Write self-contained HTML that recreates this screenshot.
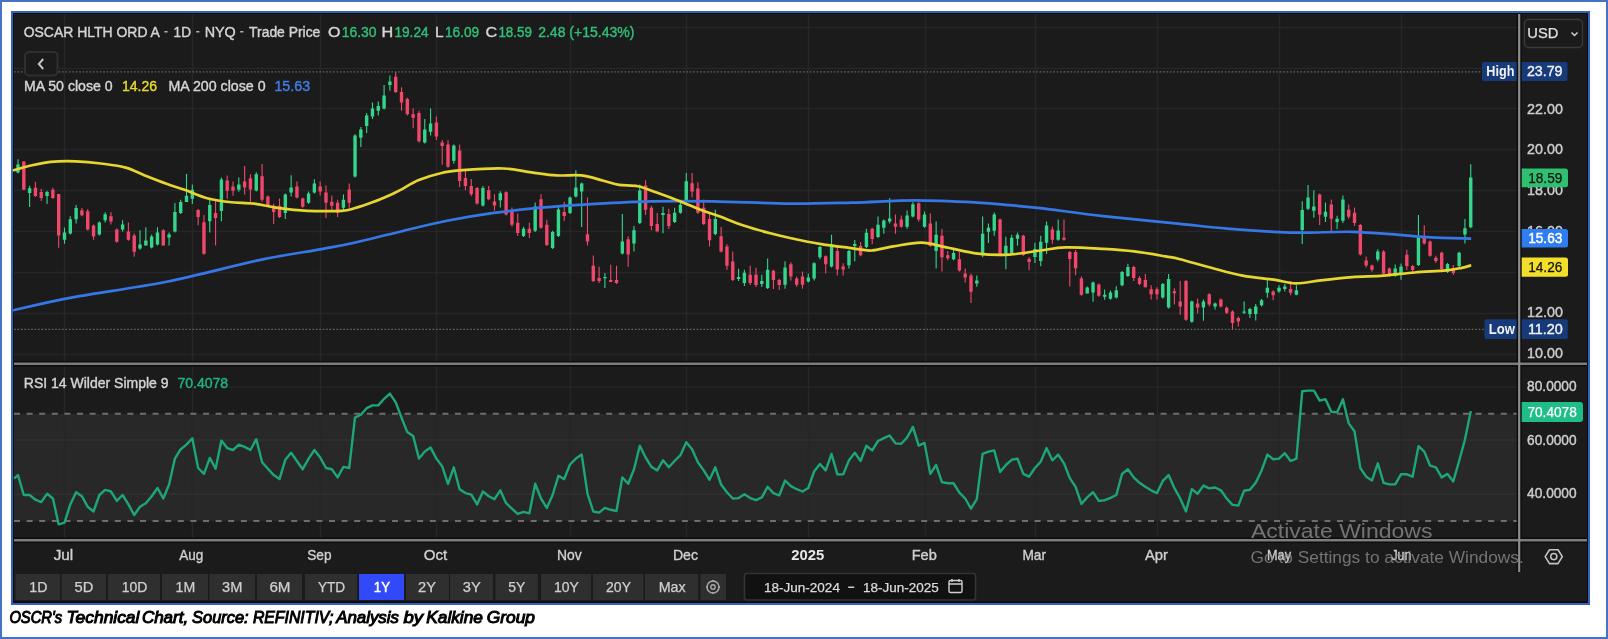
<!DOCTYPE html><html><head><meta charset="utf-8"><style>
html,body{margin:0;padding:0;background:#fff;width:1608px;height:639px;overflow:hidden}
svg{position:absolute;left:0;top:0;font-family:"Liberation Sans", sans-serif;filter:blur(0.55px)}
</style></head><body>
<svg width="1608" height="639" viewBox="0 0 1608 639">
<rect x="0" y="0" width="1608" height="639" fill="#ffffff"/>
<rect x="1" y="1" width="1606" height="637" fill="none" stroke="#4472c4" stroke-width="2"/>
<rect x="12" y="12" width="1577" height="592" fill="#0f0d0a" stroke="#3461bd" stroke-width="2"/>
<rect x="14" y="14" width="1573" height="587" fill="#1b1b1b"/>

<rect x="14" y="413.8" width="1505" height="107.1" fill="#282828"/>
<path d="M14 68.5H1519 M14 108.5H1519 M14 149.5H1519 M14 190.5H1519 M14 231.5H1519 M14 272.5H1519 M14 313.5H1519 M14 354.5H1519 M637 27.5H1519 M229 387H1519 M64.5 14V540 M192.5 14V540 M320.5 14V540 M436.5 14V540 M570.5 14V540 M686.5 14V540 M808.5 14V540 M925.5 14V540 M1035.5 14V540 M1157.5 14V540 M1279.5 14V540 M1401.5 14V540" stroke="#262628" stroke-width="1.6" fill="none"/>
<path d="M14 440H1519 M14 494H1519" stroke="#313133" stroke-width="1.6" fill="none"/>
<path d="M14 71.9H1482 M14 329.4H1484" stroke="#626262" stroke-width="1.3" stroke-dasharray="1.7 1.73" fill="none"/>
<path d="M14 413.8H1519 M14 520.9H1519" stroke="#6e6e6e" stroke-width="2" stroke-dasharray="6 6.6" fill="none"/>
<path d="M18.00 159.3V173.6 M29.62 185.8V207.1 M47.05 190.8V204.1 M64.49 227.5V243.7 M70.30 216.3V234.6 M76.11 205.1V223.4 M99.35 221.4V235.6 M105.16 212.2V222.4 M122.60 220.3V231.5 M140.03 230.3V249.7 M145.84 227.3V245.6 M151.65 234.4V248.6 M157.46 227.3V245.6 M169.09 232.4V245.6 M174.90 202.9V232.4 M180.71 199.8V214.1 M186.52 174.0V201.9 M192.33 184.6V203.9 M209.76 198.8V232.4 M221.38 177.5V221.2 M238.82 177.5V191.7 M256.25 172.2V191.5 M285.31 193.6V219.0 M291.12 175.2V196.6 M308.55 191.5V203.7 M314.36 179.3V193.6 M343.42 194.6V210.8 M355.04 134.2V177.6 M360.85 127.1V147.1 M366.66 113.1V133.0 M372.47 102.5V118.9 M378.28 101.4V115.4 M384.09 84.9V109.6 M389.90 75.6V90.8 M424.77 118.9V143.6 M430.58 108.4V135.4 M453.82 144.4V163.7 M482.88 186.1V206.4 M500.31 191.2V207.5 M523.56 226.8V236.9 M535.18 202.4V231.9 M552.61 230.8V249.1 M558.42 206.4V236.9 M570.04 196.6V213.9 M575.86 170.2V197.6 M581.67 182.4V227.1 M604.91 272.9V288.1 M622.34 213.9V254.6 M633.97 226.1V251.5 M639.78 184.4V224.1 M663.02 206.8V233.2 M674.64 207.7V223.0 M680.45 202.6V213.8 M686.26 173.1V203.6 M715.32 209.7V235.2 M738.56 268.7V280.9 M744.38 269.7V286.0 M761.81 274.8V287.0 M767.62 258.6V289.1 M785.05 261.3V288.7 M808.30 273.5V282.6 M814.11 262.3V280.6 M819.92 246.0V259.2 M831.54 234.8V267.4 M848.97 250.1V268.4 M854.78 239.9V261.3 M866.41 228.7V248.0 M878.03 216.5V237.9 M883.84 219.6V233.8 M889.65 198.2V223.6 M907.08 210.4V228.7 M912.89 202.3V217.5 M924.52 211.4V227.7 M936.14 221.6V268.4 M953.57 248.0V260.2 M976.81 275.5V286.7 M982.63 216.5V257.2 M988.44 223.6V243.0 M994.25 212.5V235.8 M1005.87 236.7V269.2 M1011.68 234.7V254.0 M1017.49 232.6V245.8 M1034.92 242.8V263.1 M1040.74 235.7V266.2 M1046.55 221.4V254.0 M1058.17 219.4V240.8 M1087.22 286.5V293.6 M1093.04 281.4V301.8 M1104.66 289.6V299.7 M1110.47 290.6V299.7 M1116.28 286.2V298.4 M1122.09 270.9V286.2 M1127.90 263.8V277.0 M1162.77 283.1V298.4 M1168.58 274.0V308.6 M1191.82 300.4V322.8 M1203.44 299.4V320.8 M1215.07 302.5V309.6 M1244.12 301.6V314.1 M1249.93 307.8V317.9 M1255.74 304.1V320.4 M1261.55 299.1V306.6 M1267.37 280.3V297.8 M1278.99 285.3V292.8 M1284.80 284.0V291.5 M1296.42 285.3V295.3 M1302.23 201.3V243.9 M1308.04 185.0V210.1 M1313.85 190.3V217.8 M1325.47 202.5V221.9 M1337.10 215.8V229.0 M1342.91 195.4V222.9 M1377.77 249.3V261.5 M1395.21 264.6V276.8 M1401.02 263.6V279.8 M1418.45 215.1V266.0 M1447.51 262.9V273.1 M1459.13 251.7V267.0 M1464.94 219.1V243.6 M1470.75 164.2V228.3" stroke="#34d68c" stroke-width="1.1" fill="none"/>
<path d="M23.81 161.4V189.8 M35.43 181.7V196.9 M41.24 188.8V201.0 M52.87 187.8V199.0 M58.68 193.9V247.8 M81.92 208.1V216.3 M87.73 209.1V230.5 M93.54 224.4V239.7 M110.98 212.2V224.4 M116.79 228.5V242.7 M128.41 222.4V240.7 M134.22 233.4V256.8 M163.28 229.3V245.6 M198.14 209.0V225.2 M203.95 215.1V254.7 M215.57 199.8V245.6 M227.20 175.4V198.8 M233.01 181.5V195.8 M244.63 166.1V194.6 M250.44 174.2V201.7 M262.06 164.1V201.7 M267.87 195.6V206.8 M273.68 203.7V224.1 M279.50 198.6V218.0 M296.93 181.4V198.6 M302.74 197.6V207.8 M320.17 181.4V195.6 M325.98 185.4V218.0 M331.79 195.6V210.8 M337.61 199.7V216.9 M349.23 183.4V207.8 M395.71 72.0V93.1 M401.53 87.3V110.7 M407.34 97.8V115.4 M413.15 108.4V128.3 M418.96 110.7V142.4 M436.39 116.6V140.0 M442.20 140.0V164.7 M448.01 140.3V167.8 M459.64 144.4V187.1 M465.45 170.8V190.2 M471.26 179.0V196.3 M477.07 187.1V204.4 M488.69 186.1V200.3 M494.50 194.2V210.5 M506.12 191.2V215.6 M511.94 207.5V226.8 M517.75 213.6V235.9 M529.37 222.7V238.0 M540.99 194.2V228.8 M546.80 219.7V246.1 M564.23 201.7V221.0 M587.48 197.6V245.4 M593.29 255.6V282.0 M599.10 266.8V283.0 M610.72 264.7V282.0 M616.53 265.8V284.1 M628.15 236.3V266.8 M645.59 180.3V214.9 M651.40 205.8V230.2 M657.21 212.9V232.2 M668.83 208.8V229.1 M692.08 173.1V197.5 M697.89 182.3V213.8 M703.70 199.6V225.0 M709.51 213.8V246.4 M721.13 227.0V252.5 M726.94 244.3V269.7 M732.75 251.4V280.9 M750.19 265.7V285.0 M756.00 267.7V287.0 M773.43 269.7V289.1 M779.24 278.9V290.1 M790.86 262.3V280.6 M796.67 276.5V286.7 M802.49 271.4V288.7 M825.73 255.2V273.5 M837.35 246.0V275.5 M843.16 263.3V275.5 M860.60 241.9V256.2 M872.22 227.7V244.0 M895.46 214.5V233.8 M901.27 215.5V227.7 M918.71 202.3V221.6 M930.33 213.5V247.0 M941.95 228.7V271.4 M947.76 251.1V260.2 M959.38 252.1V271.4 M965.19 268.4V282.6 M971.00 273.5V303.0 M1000.06 218.6V256.2 M1023.30 234.7V256.0 M1029.11 257.0V270.2 M1052.36 226.5V243.8 M1063.98 219.4V240.8 M1069.79 250.9V286.5 M1075.60 249.9V275.3 M1081.41 276.4V295.7 M1098.85 283.5V296.7 M1133.71 265.8V281.1 M1139.52 276.0V285.2 M1145.33 274.0V287.2 M1151.14 285.2V299.4 M1156.96 287.2V299.4 M1174.39 288.2V304.5 M1180.20 281.1V314.7 M1186.01 280.1V320.8 M1197.63 298.4V313.6 M1209.25 293.3V306.5 M1220.88 298.4V307.5 M1226.69 306.6V314.1 M1232.50 310.3V329.1 M1238.31 316.6V326.6 M1273.18 290.3V300.3 M1290.61 281.5V295.3 M1319.66 193.4V224.9 M1331.29 199.5V231.0 M1348.72 204.6V218.8 M1354.53 207.6V225.9 M1360.34 223.9V255.4 M1366.15 256.4V267.6 M1371.96 264.6V271.7 M1383.59 250.3V274.7 M1389.40 267.6V276.8 M1406.83 249.7V270.0 M1412.64 265.0V274.1 M1424.26 225.3V244.6 M1430.07 240.5V256.8 M1435.88 255.8V262.9 M1441.69 251.7V270.0 M1453.32 265.0V275.1" stroke="#f0476b" stroke-width="1.1" fill="none"/>
<path d="M16.30 164.4h3.4V172.5h-3.4Z M27.92 188.2h3.4V192.9h-3.4Z M45.35 191.9h3.4V195.9h-3.4Z M62.79 232.5h3.4V239.7h-3.4Z M68.60 219.3h3.4V233.6h-3.4Z M74.41 208.1h3.4V219.3h-3.4Z M97.65 222.4h3.4V234.6h-3.4Z M103.46 214.2h3.4V220.3h-3.4Z M120.90 224.4h3.4V229.5h-3.4Z M138.33 244.6h3.4V248.6h-3.4Z M144.14 240.5h3.4V245.6h-3.4Z M149.95 236.4h3.4V247.6h-3.4Z M155.76 232.4h3.4V244.6h-3.4Z M167.39 234.4h3.4V237.5h-3.4Z M173.20 212.0h3.4V231.4h-3.4Z M179.01 201.9h3.4V213.0h-3.4Z M184.82 195.8h3.4V201.9h-3.4Z M190.63 189.7h3.4V198.8h-3.4Z M208.06 204.9h3.4V221.2h-3.4Z M219.69 179.5h3.4V211.0h-3.4Z M237.12 184.6h3.4V189.7h-3.4Z M254.55 174.2h3.4V190.5h-3.4Z M283.61 194.6h3.4V212.9h-3.4Z M289.42 187.5h3.4V192.5h-3.4Z M306.85 193.6h3.4V202.7h-3.4Z M312.66 183.4h3.4V192.5h-3.4Z M341.72 199.7h3.4V207.8h-3.4Z M353.34 135.4h3.4V176.4h-3.4Z M359.15 129.5h3.4V137.7h-3.4Z M364.96 115.4h3.4V126.0h-3.4Z M370.77 108.4h3.4V116.6h-3.4Z M376.58 106.0h3.4V110.7h-3.4Z M382.39 95.5h3.4V108.4h-3.4Z M388.20 81.4h3.4V84.9h-3.4Z M423.07 129.5h3.4V142.4h-3.4Z M428.88 123.6h3.4V131.8h-3.4Z M452.12 145.4h3.4V160.7h-3.4Z M481.18 188.1h3.4V205.4h-3.4Z M498.61 193.2h3.4V200.3h-3.4Z M521.86 228.8h3.4V235.9h-3.4Z M533.48 206.4h3.4V230.8h-3.4Z M550.91 231.9h3.4V248.1h-3.4Z M556.72 209.5h3.4V235.9h-3.4Z M568.34 197.6h3.4V212.9h-3.4Z M574.16 187.5h3.4V196.6h-3.4Z M579.97 183.4h3.4V191.5h-3.4Z M603.21 276.9h3.4V278.2h-3.4Z M620.64 241.4h3.4V253.6h-3.4Z M632.27 230.2h3.4V243.4h-3.4Z M638.08 190.5h3.4V223.0h-3.4Z M661.32 212.9h3.4V214.9h-3.4Z M672.94 212.8h3.4V221.9h-3.4Z M678.75 204.7h3.4V212.8h-3.4Z M684.56 181.3h3.4V201.6h-3.4Z M713.62 218.9h3.4V234.1h-3.4Z M736.86 276.9h3.4V278.9h-3.4Z M742.67 272.8h3.4V283.0h-3.4Z M760.11 280.9h3.4V284.0h-3.4Z M765.92 269.7h3.4V288.0h-3.4Z M783.35 267.4h3.4V284.7h-3.4Z M806.60 277.5h3.4V281.6h-3.4Z M812.41 263.3h3.4V278.6h-3.4Z M818.22 247.0h3.4V257.2h-3.4Z M829.84 246.0h3.4V266.4h-3.4Z M847.27 251.1h3.4V265.3h-3.4Z M853.08 244.0h3.4V246.0h-3.4Z M864.71 232.8h3.4V247.0h-3.4Z M876.33 224.7h3.4V236.9h-3.4Z M882.14 220.6h3.4V227.7h-3.4Z M887.95 218.6h3.4V221.6h-3.4Z M905.38 215.5h3.4V226.7h-3.4Z M911.19 204.3h3.4V216.5h-3.4Z M922.82 214.5h3.4V226.7h-3.4Z M934.44 234.8h3.4V251.1h-3.4Z M951.87 253.1h3.4V259.2h-3.4Z M975.11 280.6h3.4V283.6h-3.4Z M980.93 233.8h3.4V255.2h-3.4Z M986.74 227.7h3.4V231.8h-3.4Z M992.55 214.5h3.4V230.8h-3.4Z M1004.17 245.8h3.4V255.0h-3.4Z M1009.98 237.7h3.4V253.0h-3.4Z M1015.79 234.7h3.4V238.7h-3.4Z M1033.22 248.9h3.4V257.0h-3.4Z M1039.04 241.8h3.4V261.1h-3.4Z M1044.85 225.5h3.4V242.8h-3.4Z M1056.47 230.6h3.4V239.7h-3.4Z M1085.52 287.5h3.4V293.6h-3.4Z M1091.34 282.5h3.4V292.6h-3.4Z M1102.96 294.7h3.4V296.7h-3.4Z M1108.77 292.6h3.4V298.7h-3.4Z M1114.58 290.2h3.4V297.4h-3.4Z M1120.39 271.9h3.4V285.2h-3.4Z M1126.20 266.9h3.4V276.0h-3.4Z M1161.07 284.1h3.4V297.4h-3.4Z M1166.88 279.1h3.4V307.5h-3.4Z M1190.12 301.4h3.4V321.8h-3.4Z M1201.74 301.4h3.4V307.5h-3.4Z M1213.37 303.5h3.4V306.5h-3.4Z M1242.42 311.6h3.4V312.8h-3.4Z M1248.23 309.1h3.4V314.1h-3.4Z M1254.04 306.6h3.4V314.1h-3.4Z M1259.85 300.3h3.4V305.3h-3.4Z M1265.66 287.8h3.4V292.8h-3.4Z M1277.29 287.8h3.4V291.5h-3.4Z M1283.10 286.5h3.4V289.0h-3.4Z M1294.72 290.3h3.4V294.8h-3.4Z M1300.53 210.1h3.4V230.1h-3.4Z M1306.34 197.6h3.4V208.8h-3.4Z M1312.15 206.6h3.4V210.7h-3.4Z M1323.77 211.7h3.4V216.8h-3.4Z M1335.40 218.8h3.4V221.9h-3.4Z M1341.21 199.5h3.4V220.8h-3.4Z M1376.07 251.4h3.4V259.5h-3.4Z M1393.51 268.6h3.4V275.8h-3.4Z M1399.32 266.6h3.4V273.7h-3.4Z M1416.75 236.4h3.4V265.0h-3.4Z M1445.81 263.9h3.4V272.1h-3.4Z M1457.43 252.7h3.4V266.0h-3.4Z M1463.24 228.3h3.4V234.4h-3.4Z M1469.05 177.4h3.4V227.3h-3.4Z" fill="#34d68c"/>
<path d="M22.11 161.4h3.4V189.8h-3.4Z M33.73 187.8h3.4V195.9h-3.4Z M39.54 191.9h3.4V198.0h-3.4Z M51.17 189.8h3.4V198.0h-3.4Z M56.98 193.9h3.4V235.6h-3.4Z M80.22 210.2h3.4V215.2h-3.4Z M86.03 211.2h3.4V229.5h-3.4Z M91.84 225.4h3.4V236.6h-3.4Z M109.28 216.3h3.4V221.4h-3.4Z M115.09 229.5h3.4V241.7h-3.4Z M126.71 231.5h3.4V239.7h-3.4Z M132.52 235.4h3.4V251.7h-3.4Z M161.58 230.3h3.4V245.6h-3.4Z M196.44 210.0h3.4V217.1h-3.4Z M202.25 222.2h3.4V253.7h-3.4Z M213.87 213.0h3.4V218.1h-3.4Z M225.50 180.5h3.4V190.7h-3.4Z M231.31 186.6h3.4V190.7h-3.4Z M242.93 181.4h3.4V187.5h-3.4Z M248.74 178.3h3.4V189.5h-3.4Z M260.36 176.3h3.4V199.7h-3.4Z M266.17 196.6h3.4V205.8h-3.4Z M271.98 205.8h3.4V211.9h-3.4Z M277.80 205.8h3.4V216.9h-3.4Z M295.23 186.4h3.4V197.6h-3.4Z M301.04 198.6h3.4V206.8h-3.4Z M318.47 186.4h3.4V191.5h-3.4Z M324.28 192.5h3.4V202.7h-3.4Z M330.09 201.7h3.4V205.8h-3.4Z M335.91 202.7h3.4V212.9h-3.4Z M347.53 189.5h3.4V202.7h-3.4Z M394.01 76.7h3.4V92.0h-3.4Z M399.83 92.0h3.4V102.5h-3.4Z M405.64 99.0h3.4V114.2h-3.4Z M411.45 114.2h3.4V117.8h-3.4Z M417.26 113.1h3.4V141.2h-3.4Z M434.69 122.5h3.4V136.5h-3.4Z M440.50 142.4h3.4V145.9h-3.4Z M446.31 144.4h3.4V166.8h-3.4Z M457.94 150.5h3.4V181.0h-3.4Z M463.75 178.0h3.4V186.1h-3.4Z M469.56 186.1h3.4V194.2h-3.4Z M475.37 188.1h3.4V203.4h-3.4Z M486.99 190.2h3.4V199.3h-3.4Z M492.80 201.4h3.4V205.4h-3.4Z M504.42 192.2h3.4V214.6h-3.4Z M510.24 210.5h3.4V224.7h-3.4Z M516.05 222.7h3.4V232.9h-3.4Z M527.67 228.8h3.4V232.9h-3.4Z M539.29 199.3h3.4V227.8h-3.4Z M545.10 224.7h3.4V245.1h-3.4Z M562.53 211.9h3.4V215.9h-3.4Z M585.78 234.2h3.4V241.4h-3.4Z M591.59 265.8h3.4V281.0h-3.4Z M597.40 278.0h3.4V281.0h-3.4Z M609.02 280.0h3.4V282.0h-3.4Z M614.83 280.0h3.4V283.0h-3.4Z M626.45 239.3h3.4V254.6h-3.4Z M643.89 185.4h3.4V209.8h-3.4Z M649.70 207.8h3.4V226.1h-3.4Z M655.51 224.1h3.4V231.2h-3.4Z M667.13 213.9h3.4V226.1h-3.4Z M690.38 183.3h3.4V191.4h-3.4Z M696.19 188.4h3.4V212.8h-3.4Z M702.00 207.7h3.4V224.0h-3.4Z M707.81 218.9h3.4V240.2h-3.4Z M719.43 236.2h3.4V251.4h-3.4Z M725.24 246.4h3.4V265.7h-3.4Z M731.05 261.6h3.4V279.9h-3.4Z M748.49 274.8h3.4V283.0h-3.4Z M754.30 274.8h3.4V285.0h-3.4Z M771.73 270.8h3.4V279.9h-3.4Z M777.54 279.9h3.4V285.0h-3.4Z M789.16 264.3h3.4V276.5h-3.4Z M794.97 278.6h3.4V284.7h-3.4Z M800.78 276.5h3.4V284.7h-3.4Z M824.03 256.2h3.4V264.3h-3.4Z M835.65 251.1h3.4V269.4h-3.4Z M841.46 266.4h3.4V269.4h-3.4Z M858.89 246.0h3.4V255.2h-3.4Z M870.52 228.7h3.4V238.9h-3.4Z M893.76 223.6h3.4V226.7h-3.4Z M899.57 219.6h3.4V226.7h-3.4Z M917.00 203.3h3.4V219.6h-3.4Z M928.63 223.6h3.4V246.0h-3.4Z M940.25 235.8h3.4V257.2h-3.4Z M946.06 255.2h3.4V258.2h-3.4Z M957.68 259.2h3.4V270.4h-3.4Z M963.49 273.5h3.4V277.5h-3.4Z M969.30 275.5h3.4V291.8h-3.4Z M998.36 219.6h3.4V255.2h-3.4Z M1021.60 235.7h3.4V255.0h-3.4Z M1027.41 259.1h3.4V262.1h-3.4Z M1050.66 229.6h3.4V239.7h-3.4Z M1062.28 237.7h3.4V239.7h-3.4Z M1068.09 251.9h3.4V259.1h-3.4Z M1073.90 251.9h3.4V268.2h-3.4Z M1079.71 278.4h3.4V294.7h-3.4Z M1097.15 284.5h3.4V295.7h-3.4Z M1132.01 266.9h3.4V278.0h-3.4Z M1137.82 278.0h3.4V284.1h-3.4Z M1143.63 280.1h3.4V287.2h-3.4Z M1149.44 289.2h3.4V294.3h-3.4Z M1155.26 289.2h3.4V294.3h-3.4Z M1172.69 291.3h3.4V293.3h-3.4Z M1178.50 301.4h3.4V306.5h-3.4Z M1184.31 281.1h3.4V319.7h-3.4Z M1195.93 303.5h3.4V307.5h-3.4Z M1207.55 294.3h3.4V304.5h-3.4Z M1219.18 299.4h3.4V306.5h-3.4Z M1224.99 307.8h3.4V312.8h-3.4Z M1230.80 311.6h3.4V322.9h-3.4Z M1236.61 317.9h3.4V321.6h-3.4Z M1271.48 291.5h3.4V295.3h-3.4Z M1288.91 289.0h3.4V292.8h-3.4Z M1317.96 194.4h3.4V214.7h-3.4Z M1329.59 204.6h3.4V218.8h-3.4Z M1347.02 209.7h3.4V216.8h-3.4Z M1352.83 212.7h3.4V222.9h-3.4Z M1358.64 224.9h3.4V254.4h-3.4Z M1364.45 260.5h3.4V265.6h-3.4Z M1370.26 265.6h3.4V269.7h-3.4Z M1381.88 251.4h3.4V273.7h-3.4Z M1387.70 268.6h3.4V275.8h-3.4Z M1405.13 254.8h3.4V266.0h-3.4Z M1410.94 266.0h3.4V270.0h-3.4Z M1422.56 236.4h3.4V243.6h-3.4Z M1428.37 241.5h3.4V255.8h-3.4Z M1434.18 257.8h3.4V260.9h-3.4Z M1439.99 252.7h3.4V269.0h-3.4Z M1451.62 268.0h3.4V273.1h-3.4Z" fill="#f0476b"/>
<path d="M13.0 310.3 C22.9 308.1 47.0 302.1 72.6 297.4 C98.2 292.6 135.2 288.1 166.5 281.8 C197.8 275.6 234.3 265.4 260.4 259.9 C286.5 254.4 307.4 251.8 323.0 248.9 C338.6 246.0 341.5 245.6 354.3 242.7 C367.1 239.8 384.6 235.3 400.0 231.7 C415.4 228.0 431.2 223.9 446.9 220.8 C462.5 217.7 478.2 215.1 493.9 212.9 C509.5 210.7 525.1 209.0 540.8 207.6 C556.4 206.2 569.5 205.3 587.8 204.3 C606.1 203.3 629.5 201.9 650.4 201.4 C671.3 200.9 689.7 201.0 713.0 201.4 C736.3 201.8 766.7 203.4 790.0 203.6 C813.3 203.8 831.7 203.1 852.6 202.6 C873.5 202.1 894.3 200.4 915.2 200.4 C936.1 200.4 962.1 201.8 977.8 202.6 C993.4 203.4 998.7 204.2 1009.1 205.1 C1019.5 206.0 1024.8 206.4 1040.4 208.2 C1056.1 210.0 1079.7 213.5 1103.0 216.1 C1126.3 218.7 1159.3 221.8 1180.0 223.9 C1200.7 226.0 1211.3 227.3 1227.0 228.6 C1242.7 229.9 1260.9 231.1 1273.9 231.8 C1286.9 232.5 1292.2 232.7 1305.2 232.7 C1318.2 232.7 1336.5 231.4 1352.2 231.8 C1367.9 232.2 1386.2 234.0 1399.2 234.9 C1412.2 235.8 1418.5 236.8 1430.5 237.4 C1442.5 238.0 1464.4 238.4 1471.2 238.6" stroke="#3577e6" stroke-width="2.7" fill="none" stroke-linejoin="round"/>
<path d="M13.0 170.5 C13.3 170.4 12.1 170.8 14.7 170.0 C17.3 169.2 22.8 167.3 28.8 166.0 C34.8 164.7 42.9 162.7 50.7 161.9 C58.5 161.1 67.4 161.0 75.7 161.3 C84.0 161.6 92.5 162.4 100.8 163.5 C109.1 164.6 118.5 165.6 125.8 167.6 C133.1 169.6 137.8 172.7 144.6 175.4 C151.4 178.1 159.7 181.4 166.5 183.8 C173.3 186.2 178.5 187.7 185.3 190.1 C192.1 192.5 199.9 196.2 207.2 198.2 C214.5 200.2 221.3 201.1 229.1 202.0 C236.9 202.9 246.3 202.7 254.1 203.6 C261.9 204.5 267.1 206.4 276.0 207.6 C284.9 208.8 296.3 210.3 307.3 210.8 C318.3 211.3 334.0 211.2 341.8 210.8 C349.6 210.4 349.1 209.8 354.3 208.3 C359.5 206.8 366.8 204.3 373.1 202.0 C379.4 199.7 387.4 196.2 391.9 194.2 C396.4 192.2 395.5 192.4 400.0 190.1 C404.5 187.8 412.0 182.9 418.8 180.1 C425.6 177.3 433.4 174.8 440.7 173.2 C448.0 171.5 452.2 171.0 462.6 170.2 C473.0 169.4 491.8 168.2 503.3 168.5 C514.8 168.8 522.6 171.2 531.5 172.3 C540.4 173.5 548.2 174.9 556.5 175.4 C564.8 175.9 573.7 174.5 581.5 175.4 C589.3 176.3 597.1 179.1 603.4 180.7 C609.7 182.3 613.4 183.9 619.1 184.8 C624.9 185.7 631.6 185.0 637.9 186.3 C644.2 187.6 649.4 190.0 656.7 192.6 C664.0 195.2 674.4 199.1 681.7 202.0 C689.0 204.9 694.2 207.4 700.5 209.8 C706.8 212.2 711.9 213.6 719.2 216.3 C726.5 219.0 735.9 223.0 744.3 225.8 C752.6 228.6 761.7 231.0 769.3 233.0 C776.9 235.0 781.3 236.1 790.0 238.0 C798.7 239.9 810.9 242.5 821.3 244.2 C831.7 245.9 844.2 247.2 852.6 248.3 C861.0 249.4 864.6 250.8 871.4 250.5 C878.2 250.2 884.9 247.7 893.3 246.4 C901.6 245.1 912.6 242.5 921.5 242.7 C930.4 242.9 937.1 245.6 946.5 247.4 C955.9 249.2 967.4 252.4 977.8 253.6 C988.2 254.8 998.7 255.1 1009.1 254.6 C1019.5 254.1 1031.0 251.7 1040.4 250.5 C1049.8 249.3 1055.0 247.7 1065.4 247.4 C1075.8 247.1 1091.5 248.2 1103.0 248.9 C1114.5 249.6 1123.9 250.2 1134.3 251.4 C1144.7 252.7 1158.0 255.1 1165.6 256.4 C1173.2 257.7 1172.4 257.3 1180.0 259.2 C1187.6 261.1 1200.9 265.1 1211.3 267.8 C1221.7 270.5 1232.2 273.6 1242.6 275.6 C1253.0 277.6 1265.0 278.4 1273.9 279.7 C1282.8 281.0 1288.0 283.3 1295.8 283.4 C1303.6 283.5 1311.5 281.4 1320.9 280.3 C1330.3 279.2 1341.8 277.9 1352.2 277.1 C1362.6 276.3 1373.1 276.4 1383.5 275.6 C1393.9 274.8 1404.4 273.4 1414.8 272.5 C1425.2 271.6 1438.3 271.1 1446.1 270.3 C1453.9 269.5 1457.6 268.6 1461.8 267.8 C1466.0 267.0 1469.6 265.7 1471.2 265.3" stroke="#e8d630" stroke-width="2.7" fill="none" stroke-linejoin="round"/>
<path d="M14.0 478.6 L18.0 475.1 L23.8 495.0 L29.6 495.0 L35.4 499.7 L41.2 502.1 L47.1 493.8 L52.9 498.5 L58.7 524.4 L64.5 522.7 L70.3 504.4 L76.1 492.2 L81.9 496.2 L87.7 506.8 L93.5 511.5 L99.4 495.0 L105.2 489.9 L111.0 491.5 L116.8 500.9 L122.6 495.0 L128.4 504.4 L134.2 515.0 L140.0 506.8 L145.8 503.2 L151.7 496.2 L157.5 488.0 L163.3 498.5 L169.1 484.5 L174.9 458.6 L180.7 449.2 L186.5 444.6 L192.3 438.2 L198.1 468.0 L204.0 473.9 L209.8 457.9 L215.6 468.7 L221.4 440.6 L227.2 448.1 L233.0 450.0 L238.8 444.6 L244.6 446.9 L250.4 450.0 L256.3 439.2 L262.1 462.2 L267.9 468.7 L273.7 475.1 L279.5 479.1 L285.3 459.8 L291.1 452.8 L296.9 461.0 L302.7 469.2 L308.6 458.6 L314.4 450.0 L320.2 457.5 L326.0 468.0 L331.8 469.2 L337.6 477.4 L343.4 466.9 L349.2 468.0 L355.0 417.6 L360.8 414.7 L366.7 408.2 L372.5 405.4 L378.3 405.4 L384.1 398.8 L389.9 393.6 L395.7 402.3 L401.5 417.6 L407.3 432.1 L413.1 435.9 L419.0 458.6 L424.8 451.6 L430.6 447.6 L436.4 458.6 L442.2 466.4 L448.0 483.8 L453.8 467.3 L459.6 489.2 L465.4 493.1 L471.3 494.6 L477.1 504.4 L482.9 491.5 L488.7 496.2 L494.5 499.2 L500.3 490.3 L506.1 503.2 L511.9 508.6 L517.7 513.8 L523.6 511.9 L529.4 513.3 L535.2 483.8 L541.0 498.5 L546.8 507.9 L552.6 495.0 L558.4 475.8 L564.2 479.1 L570.0 464.5 L575.9 458.6 L581.7 454.6 L587.5 493.8 L593.3 511.5 L599.1 512.6 L604.9 507.9 L610.7 509.8 L616.5 511.0 L622.3 477.4 L628.2 483.8 L634.0 469.2 L639.8 445.7 L645.6 457.5 L651.4 466.9 L657.2 470.4 L663.0 460.3 L668.8 467.3 L674.6 461.0 L680.5 455.1 L686.3 442.2 L692.1 449.2 L697.9 462.2 L703.7 470.4 L709.5 479.8 L715.3 467.3 L721.1 484.5 L726.9 492.2 L732.8 498.5 L738.6 498.1 L744.4 494.3 L750.2 498.1 L756.0 500.2 L761.8 497.4 L767.6 486.8 L773.4 493.1 L779.2 495.5 L785.1 480.5 L790.9 486.1 L796.7 489.2 L802.5 491.5 L808.3 488.0 L814.1 471.5 L819.9 464.0 L825.7 470.4 L831.5 453.9 L837.4 474.4 L843.2 474.4 L849.0 460.3 L854.8 452.8 L860.6 461.0 L866.4 445.7 L872.2 450.4 L878.0 441.0 L883.8 438.2 L889.6 435.5 L895.5 443.4 L901.3 443.8 L907.1 437.5 L912.9 426.9 L918.7 445.7 L924.5 442.9 L930.3 473.9 L936.1 465.0 L941.9 482.1 L947.8 483.3 L953.6 483.3 L959.4 492.7 L965.2 498.5 L971.0 508.6 L976.8 499.2 L982.6 453.9 L988.4 451.6 L994.2 450.4 L1000.1 472.0 L1005.9 465.0 L1011.7 459.8 L1017.5 458.6 L1023.3 473.9 L1029.1 476.7 L1034.9 468.0 L1040.7 461.7 L1046.5 448.1 L1052.4 460.3 L1058.2 454.6 L1064.0 463.3 L1069.8 478.1 L1075.6 486.8 L1081.4 503.9 L1087.2 497.4 L1093.0 492.2 L1098.8 500.9 L1104.7 500.2 L1110.5 497.8 L1116.3 495.0 L1122.1 473.9 L1127.9 469.2 L1133.7 477.4 L1139.5 482.8 L1145.3 486.8 L1151.1 490.3 L1157.0 493.1 L1162.8 480.9 L1168.6 475.1 L1174.4 488.2 L1180.2 498.5 L1186.0 511.4 L1191.8 489.1 L1197.6 493.8 L1203.4 485.6 L1209.3 488.4 L1215.1 487.5 L1220.9 490.3 L1226.7 498.5 L1232.5 504.9 L1238.3 505.6 L1244.1 490.8 L1249.9 489.8 L1255.7 482.8 L1261.6 470.4 L1267.4 454.6 L1273.2 459.3 L1279.0 458.6 L1284.8 453.2 L1290.6 461.0 L1296.4 458.6 L1302.2 391.3 L1308.0 390.6 L1313.9 390.6 L1319.7 400.7 L1325.5 399.2 L1331.3 411.7 L1337.1 412.4 L1342.9 399.2 L1348.7 423.4 L1354.5 431.2 L1360.3 468.0 L1366.2 476.7 L1372.0 480.4 L1377.8 463.3 L1383.6 482.8 L1389.4 484.4 L1395.2 484.4 L1401.0 474.3 L1406.8 474.3 L1412.6 476.7 L1418.5 446.2 L1424.3 451.6 L1430.1 465.7 L1435.9 467.3 L1441.7 477.4 L1447.5 473.9 L1453.3 481.4 L1459.1 461.0 L1464.9 439.8 L1470.8 411.0" stroke="#1ca67a" stroke-width="2.4" fill="none" stroke-linejoin="round"/>
<text x="23.7" y="37" font-size="14" fill="#d4d4d4" stroke="#d4d4d4" stroke-width="0.4" textLength="136.2" lengthAdjust="spacingAndGlyphs">OSCAR HLTH ORD A</text>
<rect x="164.4" y="31" width="3.2" height="1.5" fill="#b0b0b0"/>
<rect x="196.2" y="31" width="3.2" height="1.5" fill="#b0b0b0"/>
<rect x="240.2" y="31" width="3.2" height="1.5" fill="#b0b0b0"/>
<text x="173.6" y="37" font-size="14" fill="#d4d4d4" stroke="#d4d4d4" stroke-width="0.4" textLength="17.4" lengthAdjust="spacingAndGlyphs">1D</text>
<text x="204.7" y="37" font-size="14" fill="#d4d4d4" stroke="#d4d4d4" stroke-width="0.4" textLength="31.1" lengthAdjust="spacingAndGlyphs">NYQ</text>
<text x="249.1" y="37" font-size="14" fill="#d4d4d4" stroke="#d4d4d4" stroke-width="0.4" textLength="71.2" lengthAdjust="spacingAndGlyphs">Trade Price</text>
<text x="328.0" y="37" font-size="14" fill="#d4d4d4" stroke="#d4d4d4" stroke-width="0.4" textLength="12.4" lengthAdjust="spacingAndGlyphs">O</text>
<text x="341.7" y="37" font-size="14" fill="#2fbf78" stroke="#2fbf78" stroke-width="0.4" textLength="34.8" lengthAdjust="spacingAndGlyphs">16.30</text>
<text x="381.4" y="37" font-size="14" fill="#d4d4d4" stroke="#d4d4d4" stroke-width="0.4" textLength="11.7" lengthAdjust="spacingAndGlyphs">H</text>
<text x="394.4" y="37" font-size="14" fill="#2fbf78" stroke="#2fbf78" stroke-width="0.4" textLength="34.2" lengthAdjust="spacingAndGlyphs">19.24</text>
<text x="435.0" y="37" font-size="14" fill="#d4d4d4" stroke="#d4d4d4" stroke-width="0.4" textLength="8.6" lengthAdjust="spacingAndGlyphs">L</text>
<text x="444.9" y="37" font-size="14" fill="#2fbf78" stroke="#2fbf78" stroke-width="0.4" textLength="34.3" lengthAdjust="spacingAndGlyphs">16.09</text>
<text x="485.4" y="37" font-size="14" fill="#d4d4d4" stroke="#d4d4d4" stroke-width="0.4" textLength="11.7" lengthAdjust="spacingAndGlyphs">C</text>
<text x="498.4" y="37" font-size="14" fill="#2fbf78" stroke="#2fbf78" stroke-width="0.4" textLength="33.5" lengthAdjust="spacingAndGlyphs">18.59</text>
<text x="538.2" y="37" font-size="14" fill="#2fbf78" stroke="#2fbf78" stroke-width="0.4" textLength="96.2" lengthAdjust="spacingAndGlyphs">2.48 (+15.43%)</text>
<rect x="25" y="52" width="32.5" height="23.5" rx="4" fill="#1b1b1b" stroke="#2f2f2f" stroke-width="2"/>
<path d="M43.2 59L38.8 64L43.2 69" stroke="#c8c8c8" stroke-width="1.9" fill="none"/>
<text x="23.9" y="91" font-size="14" fill="#d4d4d4" stroke="#d4d4d4" stroke-width="0.4" textLength="88.8" lengthAdjust="spacingAndGlyphs">MA 50 close 0</text>
<text x="122.0" y="91" font-size="14" fill="#e9d830" stroke="#e9d830" stroke-width="0.4" textLength="35.1" lengthAdjust="spacingAndGlyphs">14.26</text>
<text x="168.4" y="91" font-size="14" fill="#d4d4d4" stroke="#d4d4d4" stroke-width="0.4" textLength="97.2" lengthAdjust="spacingAndGlyphs">MA 200 close 0</text>
<text x="274.4" y="91" font-size="14" fill="#3f7fe6" stroke="#3f7fe6" stroke-width="0.4" textLength="35.7" lengthAdjust="spacingAndGlyphs">15.63</text>
<text x="23.8" y="387.5" font-size="14" fill="#d4d4d4" stroke="#d4d4d4" stroke-width="0.4" textLength="144.8" lengthAdjust="spacingAndGlyphs">RSI 14 Wilder Simple 9</text>
<text x="177.4" y="387.5" font-size="14" fill="#1fb582" stroke="#1fb582" stroke-width="0.4" textLength="50.8" lengthAdjust="spacingAndGlyphs">70.4078</text>
<text x="1527.1" y="113.8" font-size="15" fill="#cccccc" stroke="#cccccc" stroke-width="0.45" textLength="35.8" lengthAdjust="spacingAndGlyphs">22.00</text>
<text x="1527.1" y="154.1" font-size="15" fill="#cccccc" stroke="#cccccc" stroke-width="0.45" textLength="35.8" lengthAdjust="spacingAndGlyphs">20.00</text>
<text x="1527.1" y="194.9" font-size="15" fill="#cccccc" stroke="#cccccc" stroke-width="0.45" textLength="35.8" lengthAdjust="spacingAndGlyphs">18.00</text>
<text x="1527.1" y="235.7" font-size="15" fill="#cccccc" stroke="#cccccc" stroke-width="0.45" textLength="35.8" lengthAdjust="spacingAndGlyphs">16.00</text>
<text x="1527.1" y="316.9" font-size="15" fill="#cccccc" stroke="#cccccc" stroke-width="0.45" textLength="35.8" lengthAdjust="spacingAndGlyphs">12.00</text>
<text x="1527.1" y="357.8" font-size="15" fill="#cccccc" stroke="#cccccc" stroke-width="0.45" textLength="35.8" lengthAdjust="spacingAndGlyphs">10.00</text>
<text x="1527.1" y="391.1" font-size="15" fill="#cccccc" stroke="#cccccc" stroke-width="0.45" textLength="49.5" lengthAdjust="spacingAndGlyphs">80.0000</text>
<text x="1527.1" y="444.7" font-size="15" fill="#cccccc" stroke="#cccccc" stroke-width="0.45" textLength="49.5" lengthAdjust="spacingAndGlyphs">60.0000</text>
<text x="1527.1" y="498.2" font-size="15" fill="#cccccc" stroke="#cccccc" stroke-width="0.45" textLength="49.5" lengthAdjust="spacingAndGlyphs">40.0000</text>
<rect x="1482" y="62" width="85.5" height="19" rx="2" fill="#173a7a"/>
<text x="1486.3" y="76" font-size="14" fill="#f2f2f2" font-weight="bold" textLength="28.1" lengthAdjust="spacingAndGlyphs">High</text>
<text x="1526.9" y="76" font-size="14.5" fill="#f2f2f2" stroke="#f2f2f2" stroke-width="0.4" textLength="35.6" lengthAdjust="spacingAndGlyphs">23.79</text>
<rect x="1484.5" y="319.2" width="83.3" height="19.8" rx="2" fill="#173a7a"/>
<text x="1488.8" y="334.2" font-size="14" fill="#f2f2f2" font-weight="bold" textLength="26.2" lengthAdjust="spacingAndGlyphs">Low</text>
<text x="1527.9" y="334.2" font-size="14.5" fill="#f2f2f2" stroke="#f2f2f2" stroke-width="0.4" textLength="34.9" lengthAdjust="spacingAndGlyphs">11.20</text>
<path d="M1520 168.6H1565.5A2.5 2.5 0 0 1 1568 171.1V184.8A2.5 2.5 0 0 1 1565.5 187.3H1520Z" fill="#2ebf70"/>
<text x="1528.2" y="182.8" font-size="14.5" fill="#101010" stroke="#101010" stroke-width="0.25" textLength="34.1" lengthAdjust="spacingAndGlyphs">18.59</text>
<path d="M1520 229H1565.5A2.5 2.5 0 0 1 1568 231.5V245.1A2.5 2.5 0 0 1 1565.5 247.6H1520Z" fill="#2f7df2"/>
<text x="1528.2" y="243.2" font-size="14.5" fill="#ffffff" stroke="#ffffff" stroke-width="0.45" textLength="34.1" lengthAdjust="spacingAndGlyphs">15.63</text>
<path d="M1520 257.5H1565.5A2.5 2.5 0 0 1 1568 260V274.3A2.5 2.5 0 0 1 1565.5 276.8H1520Z" fill="#f3df2b"/>
<text x="1528.2" y="271.8" font-size="14.5" fill="#101010" stroke="#101010" stroke-width="0.25" textLength="34.1" lengthAdjust="spacingAndGlyphs">14.26</text>
<path d="M1519 402H1580A3 3 0 0 1 1583 405V419A3 3 0 0 1 1580 422H1519Z" fill="#1fbe88"/>
<text x="1527.4" y="417.2" font-size="14.5" fill="#ffffff" stroke="#ffffff" stroke-width="0.25" textLength="49.4" lengthAdjust="spacingAndGlyphs">70.4078</text>
<path d="M14 363.8H1587 M14 540.3H1587" stroke="#0c0c0c" stroke-width="5.5" fill="none"/>
<path d="M1519.2 14V572" stroke="#0c0c0c" stroke-width="5" fill="none"/>
<path d="M14 363.8H1587 M14 540.3H1587" stroke="#7c7c7c" stroke-width="2.4" fill="none"/>
<path d="M1519.2 14V572" stroke="#8e8e8e" stroke-width="2.2" fill="none"/>
<rect x="1524.5" y="19.5" width="58" height="28" rx="4" fill="none" stroke="#3a3a3a" stroke-width="1.3"/>
<text x="1527.3" y="38.4" font-size="14.5" fill="#e0e0e0" stroke="#e0e0e0" stroke-width="0.25" textLength="31.0" lengthAdjust="spacingAndGlyphs">USD</text>
<path d="M1571.5 32.5L1574.5 35.5L1577.5 32.5" stroke="#d0d0d0" stroke-width="1.5" fill="none"/>
<text x="53.7" y="560.4" font-size="14.5" fill="#d0d0d0" stroke="#d0d0d0" stroke-width="0.35" textLength="19.6" lengthAdjust="spacingAndGlyphs">Jul</text>
<text x="179.3" y="560.4" font-size="14.5" fill="#d0d0d0" stroke="#d0d0d0" stroke-width="0.35" textLength="24.1" lengthAdjust="spacingAndGlyphs">Aug</text>
<text x="307.2" y="560.4" font-size="14.5" fill="#d0d0d0" stroke="#d0d0d0" stroke-width="0.35" textLength="24.3" lengthAdjust="spacingAndGlyphs">Sep</text>
<text x="423.7" y="560.4" font-size="14.5" fill="#d0d0d0" stroke="#d0d0d0" stroke-width="0.35" textLength="23.5" lengthAdjust="spacingAndGlyphs">Oct</text>
<text x="556.9" y="560.4" font-size="14.5" fill="#d0d0d0" stroke="#d0d0d0" stroke-width="0.35" textLength="24.7" lengthAdjust="spacingAndGlyphs">Nov</text>
<text x="672.9" y="560.4" font-size="14.5" fill="#d0d0d0" stroke="#d0d0d0" stroke-width="0.35" textLength="25.1" lengthAdjust="spacingAndGlyphs">Dec</text>
<text x="911.7" y="560.4" font-size="14.5" fill="#d0d0d0" stroke="#d0d0d0" stroke-width="0.35" textLength="25.1" lengthAdjust="spacingAndGlyphs">Feb</text>
<text x="1022.4" y="560.4" font-size="14.5" fill="#d0d0d0" stroke="#d0d0d0" stroke-width="0.35" textLength="23.6" lengthAdjust="spacingAndGlyphs">Mar</text>
<text x="1144.9" y="560.4" font-size="14.5" fill="#d0d0d0" stroke="#d0d0d0" stroke-width="0.35" textLength="23.0" lengthAdjust="spacingAndGlyphs">Apr</text>
<text x="1267.0" y="560.4" font-size="14.5" fill="#d0d0d0" stroke="#d0d0d0" stroke-width="0.35" textLength="24.0" lengthAdjust="spacingAndGlyphs">May</text>
<text x="1391.4" y="560.4" font-size="14.5" fill="#d0d0d0" stroke="#d0d0d0" stroke-width="0.35" textLength="19.9" lengthAdjust="spacingAndGlyphs">Jun</text>
<text x="791.3" y="560.4" font-size="14.5" fill="#e8e8e8" font-weight="bold" textLength="33.0" lengthAdjust="spacingAndGlyphs">2025</text>
<path d="M1549.5 549.8L1558 549.8L1562.3 556.6L1558 563.6L1549.5 563.6L1545.2 556.6Z" fill="none" stroke="#c4c4c4" stroke-width="1.6" stroke-linejoin="round"/><circle cx="1553.8" cy="556.6" r="3.1" fill="none" stroke="#c4c4c4" stroke-width="1.5"/>
<rect x="15.5" y="574" width="44.5" height="26" fill="#2f2f2f"/>
<text x="29.3" y="592.2" font-size="14" fill="#d0d0d0" stroke="#d0d0d0" stroke-width="0.25" textLength="18.1" lengthAdjust="spacingAndGlyphs">1D</text>
<rect x="61.5" y="574" width="44.5" height="26" fill="#2f2f2f"/>
<text x="74.6" y="592.2" font-size="14" fill="#d0d0d0" stroke="#d0d0d0" stroke-width="0.25" textLength="18.8" lengthAdjust="spacingAndGlyphs">5D</text>
<rect x="108" y="574" width="52" height="26" fill="#2f2f2f"/>
<text x="121.8" y="592.2" font-size="14" fill="#d0d0d0" stroke="#d0d0d0" stroke-width="0.25" textLength="25.6" lengthAdjust="spacingAndGlyphs">10D</text>
<rect x="162" y="574" width="46" height="26" fill="#2f2f2f"/>
<text x="175.6" y="592.2" font-size="14" fill="#d0d0d0" stroke="#d0d0d0" stroke-width="0.25" textLength="19.6" lengthAdjust="spacingAndGlyphs">1M</text>
<rect x="209.5" y="574" width="45.5" height="26" fill="#2f2f2f"/>
<text x="222.1" y="592.2" font-size="14" fill="#d0d0d0" stroke="#d0d0d0" stroke-width="0.25" textLength="20.3" lengthAdjust="spacingAndGlyphs">3M</text>
<rect x="257" y="574" width="45" height="26" fill="#2f2f2f"/>
<text x="269.4" y="592.2" font-size="14" fill="#d0d0d0" stroke="#d0d0d0" stroke-width="0.25" textLength="21.1" lengthAdjust="spacingAndGlyphs">6M</text>
<rect x="305" y="574" width="52" height="26" fill="#2f2f2f"/>
<text x="317.9" y="592.2" font-size="14" fill="#d0d0d0" stroke="#d0d0d0" stroke-width="0.25" textLength="27.3" lengthAdjust="spacingAndGlyphs">YTD</text>
<rect x="359" y="574" width="45" height="26" fill="#3149f8"/>
<text x="373.8" y="592.2" font-size="14" fill="#ffffff" stroke="#ffffff" stroke-width="0.5" textLength="16.2" lengthAdjust="spacingAndGlyphs">1Y</text>
<rect x="406" y="574" width="43" height="26" fill="#2f2f2f"/>
<text x="418.1" y="592.2" font-size="14" fill="#d0d0d0" stroke="#d0d0d0" stroke-width="0.25" textLength="17.9" lengthAdjust="spacingAndGlyphs">2Y</text>
<rect x="450" y="574" width="43" height="26" fill="#2f2f2f"/>
<text x="462.8" y="592.2" font-size="14" fill="#d0d0d0" stroke="#d0d0d0" stroke-width="0.25" textLength="18.0" lengthAdjust="spacingAndGlyphs">3Y</text>
<rect x="495.5" y="574" width="42.5" height="26" fill="#2f2f2f"/>
<text x="508.2" y="592.2" font-size="14" fill="#d0d0d0" stroke="#d0d0d0" stroke-width="0.25" textLength="17.0" lengthAdjust="spacingAndGlyphs">5Y</text>
<rect x="541" y="574" width="50" height="26" fill="#2f2f2f"/>
<text x="553.9" y="592.2" font-size="14" fill="#d0d0d0" stroke="#d0d0d0" stroke-width="0.25" textLength="24.9" lengthAdjust="spacingAndGlyphs">10Y</text>
<rect x="593" y="574" width="50.5" height="26" fill="#2f2f2f"/>
<text x="606.1" y="592.2" font-size="14" fill="#d0d0d0" stroke="#d0d0d0" stroke-width="0.25" textLength="24.9" lengthAdjust="spacingAndGlyphs">20Y</text>
<rect x="645" y="574" width="53" height="26" fill="#2f2f2f"/>
<text x="658.7" y="592.2" font-size="14" fill="#d0d0d0" stroke="#d0d0d0" stroke-width="0.25" textLength="27.0" lengthAdjust="spacingAndGlyphs">Max</text>
<rect x="700.5" y="574" width="25.5" height="26" fill="#2f2f2f"/><circle cx="713" cy="587" r="6" fill="none" stroke="#a8a8a8" stroke-width="1.5"/><path d="M713 580V582 M713 592V594 M706 587H708 M718 587H720" stroke="#a8a8a8" stroke-width="1.5"/><circle cx="713" cy="587" r="2.2" fill="none" stroke="#a8a8a8" stroke-width="1.4"/>
<rect x="744.5" y="573.5" width="231" height="26.5" rx="2.5" fill="#111111" stroke="#333333" stroke-width="1.7"/>
<text x="764.0" y="592" font-size="13" fill="#dadada" stroke="#dadada" stroke-width="0.25" textLength="75.9" lengthAdjust="spacingAndGlyphs">18-Jun-2024</text>
<rect x="848.2" y="586.5" width="6" height="1.5" fill="#d0d0d0"/>
<text x="862.9" y="592" font-size="13" fill="#dadada" stroke="#dadada" stroke-width="0.25" textLength="75.8" lengthAdjust="spacingAndGlyphs">18-Jun-2025</text>
<rect x="949" y="580.5" width="13" height="12" rx="1.5" fill="none" stroke="#d0d0d0" stroke-width="1.4"/><path d="M949 584H962 M952 579V582 M959 579V582" stroke="#d0d0d0" stroke-width="1.4"/>
<text x="1251.0" y="538.3" font-size="21" fill="#8a8a8a" textLength="181.4" lengthAdjust="spacingAndGlyphs" fill-opacity="0.8">Activate Windows</text>
<text x="1250.6" y="562.5" font-size="17" fill="#8a8a8a" textLength="273.2" lengthAdjust="spacingAndGlyphs" fill-opacity="0.8">Go to Settings to activate Windows.</text>
<text x="9.4" y="623" font-size="16.5" fill="#000" stroke="#000" stroke-width="1.0" textLength="52.8" lengthAdjust="spacingAndGlyphs" font-style="italic">OSCR's</text>
<text x="66.6" y="623" font-size="16.5" fill="#000" stroke="#000" stroke-width="1.0" textLength="72.8" lengthAdjust="spacingAndGlyphs" font-style="italic">Technical</text>
<text x="141.9" y="623" font-size="16.5" fill="#000" stroke="#000" stroke-width="1.0" textLength="46.3" lengthAdjust="spacingAndGlyphs" font-style="italic">Chart,</text>
<text x="192.1" y="623" font-size="16.5" fill="#000" stroke="#000" stroke-width="1.0" textLength="56.6" lengthAdjust="spacingAndGlyphs" font-style="italic">Source:</text>
<text x="252.9" y="623" font-size="16.5" fill="#000" stroke="#000" stroke-width="1.0" textLength="80.6" lengthAdjust="spacingAndGlyphs" font-style="italic">REFINITIV;</text>
<text x="336.2" y="623" font-size="16.5" fill="#000" stroke="#000" stroke-width="1.0" textLength="62.8" lengthAdjust="spacingAndGlyphs" font-style="italic">Analysis</text>
<text x="403.4" y="623" font-size="16.5" fill="#000" stroke="#000" stroke-width="1.0" textLength="19.6" lengthAdjust="spacingAndGlyphs" font-style="italic">by</text>
<text x="426.3" y="623" font-size="16.5" fill="#000" stroke="#000" stroke-width="1.0" textLength="56.6" lengthAdjust="spacingAndGlyphs" font-style="italic">Kalkine</text>
<text x="486.8" y="623" font-size="16.5" fill="#000" stroke="#000" stroke-width="1.0" textLength="48.2" lengthAdjust="spacingAndGlyphs" font-style="italic">Group</text>
</svg></body></html>
